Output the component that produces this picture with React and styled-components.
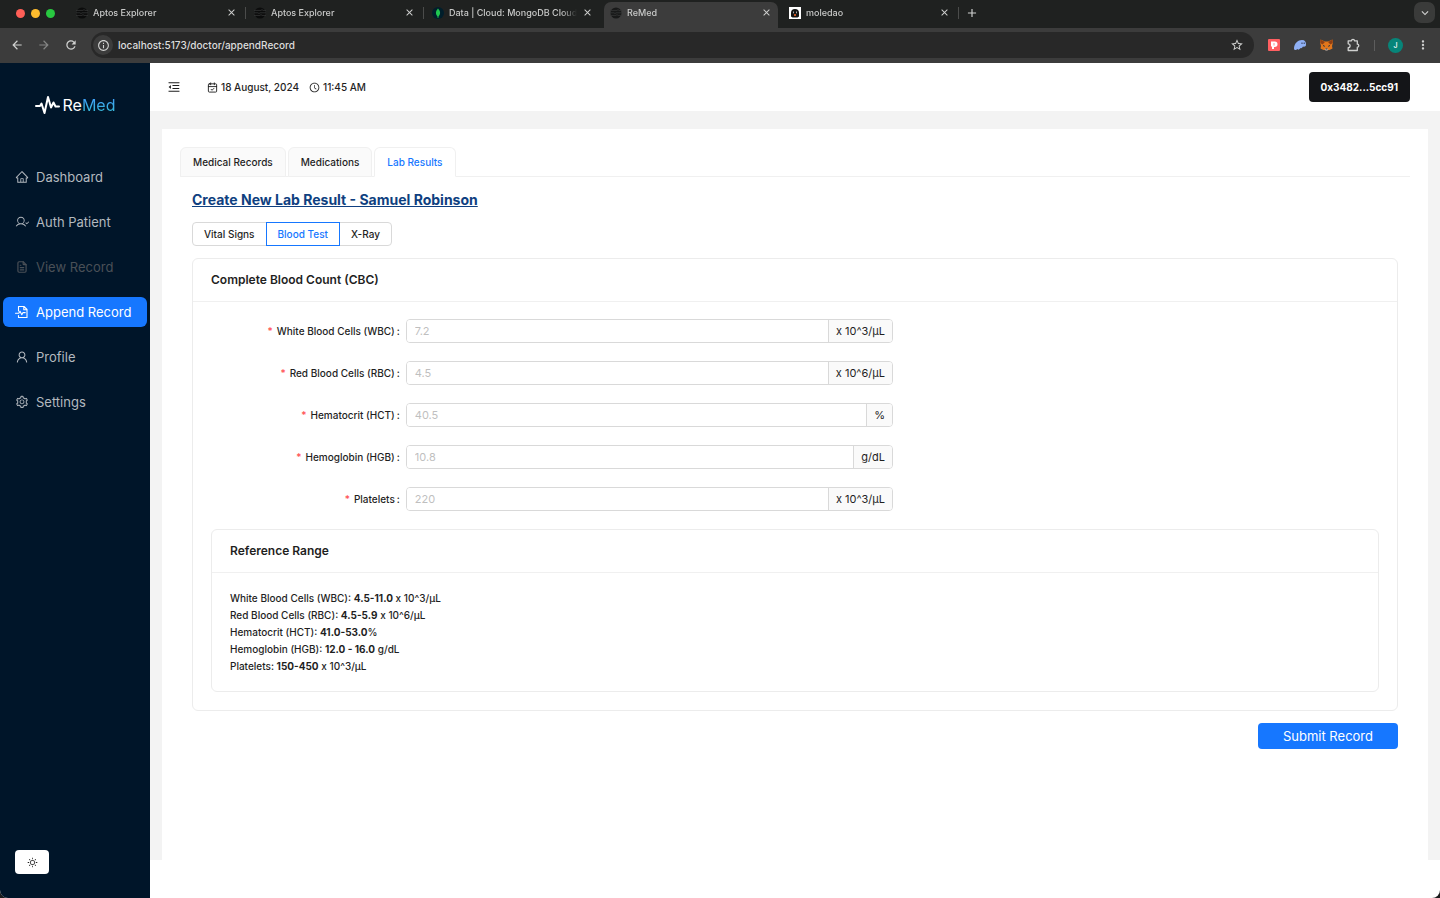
import React from "react";
import styled, { createGlobalStyle } from "styled-components";
import {
  AiOutlineClockCircle,
  AiOutlineHome,
  AiOutlineMenuFold,
  AiOutlineSetting,
  AiOutlineSun,
  AiOutlineUser,
} from "react-icons/ai";
import { PiUserCheck } from "react-icons/pi";
import { TbFileText } from "react-icons/tb";
import { LuCalendarCheck } from "react-icons/lu";
import {
  MdArrowBack,
  MdArrowForward,
  MdRefresh,
  MdInfoOutline,
  MdStarBorder,
  MdMoreVert,
  MdClose,
  MdAdd,
  MdKeyboardArrowDown,
} from "react-icons/md";

const GlobalStyle = createGlobalStyle`
  * {
    box-sizing: border-box;
  }
  body {
    margin: 0;
    background: #1b1c1d;
    color: #1f1f1f;
    font-family: Inter, "Liberation Sans", sans-serif;
    font-size: 10px;
    font-weight: 500;
  }
  button, input {
    font-family: inherit;
    font-size: inherit;
    font-weight: inherit;
    color: inherit;
  }
  button {
    padding: 0;
    border: none;
    background: none;
    cursor: pointer;
  }
  svg {
    display: block;
    flex-shrink: 0;
  }
`;

const Window = styled.div`
  min-height: 100vh;
  display: flex;
  flex-direction: column;
  overflow: hidden;
  border-radius: 0 0 8px 8px;
  background: #ffffff;
`;

/* browser */
const TabStrip = styled.div`
  height: 28px;
  display: flex;
  background: #1f2120;
  color: #c9cac9;
`;
const Lights = styled.div`
  display: flex;
  align-items: center;
  gap: 6px;
  padding: 0 13px 2px 16px;
`;
const Light = styled.span`
  width: 9px;
  height: 9px;
  border-radius: 50%;
  background: ${(props) => props.$color};
`;
const Tab = styled.div`
  position: relative;
  width: ${(props) => (props.$active ? "174px" : "178px")};
  height: ${(props) => (props.$active ? "26px" : "25px")};
  margin: ${(props) => (props.$active ? "2px 3px 0 2px" : "0")};
  padding: ${(props) => (props.$active ? "0 6px 5px" : "0 9px 0 8px")};
  display: flex;
  align-items: center;
  gap: 5px;
  font-size: 9px;
  border-radius: 7px 7px 0 0;
  background: ${(props) => (props.$active ? "#3c3c3c" : "transparent")};

  &::after {
    content: "";
    position: absolute;
    right: 0;
    top: 7px;
    width: 1px;
    height: 12px;
    background: ${(props) => (props.$divider ? "#4b4c4b" : "transparent")};
  }
`;
const TabTitle = styled.span`
  flex: 1;
  min-width: 0;
  overflow: hidden;
  white-space: nowrap;
  mask-image: linear-gradient(to right, #000 88%, transparent);
`;
const ChromeButton = styled.button`
  display: flex;
  align-items: center;
  justify-content: center;
  color: ${(props) => (props.$dim ? "#858685" : "#d0d1d0")};
`;
const NewTab = styled(ChromeButton)`
  height: 25px;
  padding: 0 6px;
`;
const TabSearch = styled(ChromeButton)`
  width: 21px;
  height: 21px;
  margin: 2px 5px 0 auto;
  border-radius: 7px;
  background: #3a3b3a;
`;
const Toolbar = styled.div`
  height: 35px;
  display: flex;
  align-items: center;
  padding: 0 10px 1px;
  background: #3c3c3c;
`;
const NavButtons = styled.div`
  display: flex;
  gap: 13px;
  margin-right: 13px;
`;
const Address = styled.div`
  flex: 1;
  height: 26px;
  display: flex;
  align-items: center;
  gap: 5px;
  padding: 0 10px 0 2px;
  border-radius: 13px;
  background: #282828;
`;
const InfoBadge = styled(ChromeButton)`
  width: 20px;
  height: 20px;
  border-radius: 50%;
  background: #3c3c3c;
`;
const AddressInput = styled.input`
  flex: 1;
  min-width: 0;
  padding: 0;
  border: none;
  outline: none;
  background: transparent;
  color: #dddddd;
`;
const Extensions = styled.div`
  display: flex;
  align-items: center;
  gap: 13px;
  margin-left: 14px;
`;
const ToolbarDivider = styled.span`
  width: 1px;
  height: 11px;
  background: #5d5d5d;
`;
const Avatar = styled.button`
  width: 15px;
  height: 15px;
  border-radius: 50%;
  background: #078579;
  color: #ffffff;
  font-size: 7px;
`;

/* page */
const Page = styled.div`
  flex: 1;
  display: flex;
`;
const Sidebar = styled.aside`
  width: 150px;
  display: flex;
  flex-direction: column;
  padding: 31px 3px 24px;
  background: #001529;
`;
const Logo = styled.a`
  display: flex;
  align-items: center;
  justify-content: center;
  gap: 3px;
  height: 22px;
  margin-bottom: 46px;
  color: #ffffff;
  font-size: 16px;
  font-weight: 400;
  text-decoration: none;
`;
const LogoAccent = styled.span`
  background: linear-gradient(#4096ff, #36c2d4);
  background-clip: text;
  color: transparent;
`;
const Menu = styled.nav`
  display: flex;
  flex-direction: column;
  gap: 15px;
`;
const MenuItem = styled.a`
  height: 30px;
  display: flex;
  align-items: center;
  gap: 7px;
  padding-left: 12px;
  border-radius: 6px;
  font-size: 13px;
  font-weight: 400;
  text-decoration: none;
  background: ${(props) => (props.$active ? "#1677ff" : "transparent")};
  color: ${(props) =>
    props.$active ? "#ffffff" : props.$disabled ? "#4a5057" : "#b3b9bf"};
`;
const ThemeButton = styled.button`
  width: 34px;
  height: 24px;
  display: flex;
  align-items: center;
  justify-content: center;
  margin: auto 0 0 12px;
  border-radius: 4px;
  background: #ffffff;
`;
const Main = styled.main`
  flex: 1;
  min-width: 0;
  display: flex;
  flex-direction: column;
`;
const Header = styled.header`
  height: 48px;
  display: flex;
  align-items: center;
  padding: 0 30px 0 17px;
`;
const DateTime = styled.div`
  display: flex;
  align-items: center;
  gap: 3px;
  margin-left: ${(props) => (props.$first ? "26px" : "10px")};
`;
const Wallet = styled.button`
  height: 30px;
  margin-left: auto;
  padding: 0 12px;
  border-radius: 4px;
  background: #141518;
  color: #ffffff;
  font-weight: 700;
`;
const Content = styled.div`
  flex: 1;
  display: flex;
  margin-bottom: 38px;
  padding: 18px 12px 0;
  background: #f3f3f3;
`;
const Panel = styled.section`
  flex: 1;
  min-width: 0;
  padding: 18px;
  background: #ffffff;
`;
const Tabs = styled.div`
  display: flex;
  gap: 2px;
  border-bottom: 1px solid #f0f0f0;
`;
const PageTab = styled.button`
  height: 30px;
  margin-bottom: -1px;
  padding: 0 12px;
  border: 1px solid #f0f0f0;
  border-bottom-color: ${(props) => (props.$active ? "#ffffff" : "#f0f0f0")};
  border-radius: 6px 6px 0 0;
  background: ${(props) => (props.$active ? "#ffffff" : "#fafafa")};
  color: ${(props) => (props.$active ? "#1677ff" : "#1f1f1f")};
`;
const Form = styled.form`
  display: flex;
  flex-direction: column;
  padding: 13px 12px 0;
`;
const Title = styled.h1`
  margin: 0 0 12px;
  color: #0f3f80;
  font-size: 14px;
  font-weight: 700;
  line-height: 20px;
  text-decoration: underline;
`;
const Segments = styled.div`
  display: flex;
  margin-bottom: 12px;
`;
const Segment = styled.button`
  height: 24px;
  margin-right: -1px;
  padding: 0 11px;
  position: relative;
  z-index: ${(props) => (props.$active ? 1 : 0)};
  border: 1px solid ${(props) => (props.$active ? "#1677ff" : "#d9d9d9")};
  color: ${(props) => (props.$active ? "#1677ff" : "#1f1f1f")};
  background: #ffffff;

  &:first-child {
    border-radius: 4px 0 0 4px;
  }
  &:last-child {
    border-radius: 0 4px 4px 0;
  }
`;
const Card = styled.section`
  border: 1px solid #ececec;
  border-radius: 6px;
`;
const CardTitle = styled.h2`
  margin: 0;
  padding: 0 18px;
  border-bottom: 1px solid #f0f0f0;
  font-size: 12px;
  font-weight: 600;
  line-height: 42px;
`;
const CardBody = styled.div`
  padding: ${(props) => (props.$text ? "17px 18px 16px" : "17px 18px 18px")};
`;
const Fields = styled.div`
  width: 682px;
  max-width: 100%;
  display: flex;
  flex-direction: column;
  gap: 18px;
  margin-bottom: 18px;
`;
const Field = styled.div`
  display: grid;
  grid-template-columns: 2fr 5fr;
  align-items: center;
`;
const Label = styled.label`
  padding-right: 6px;
  text-align: right;
`;
const Required = styled.span`
  margin-right: 4px;
  color: #ff4d4f;
`;
const Colon = styled.span`
  margin-left: 2px;
`;
const InputGroup = styled.div`
  height: 24px;
  display: flex;
  border: 1px solid #d9d9d9;
  border-radius: 4px;
  overflow: hidden;
  font-size: 11px;
  font-weight: 400;
`;
const ValueInput = styled.input`
  flex: 1;
  min-width: 0;
  padding: 0 8px;
  border: none;
  outline: none;

  &::placeholder {
    color: #bfbfbf;
  }
`;
const Unit = styled.span`
  display: flex;
  align-items: center;
  padding: 0 7px;
  border-left: 1px solid #d9d9d9;
  background: #fafafa;
`;
const Ranges = styled.ul`
  margin: 0;
  padding: 0;
  list-style: none;
  line-height: 17px;
`;
const Value = styled.b`
  font-weight: 700;
`;
const Submit = styled.button`
  align-self: flex-end;
  height: 26px;
  margin-top: 12px;
  padding: 0 25px;
  border-radius: 4px;
  background: #1677ff;
  color: #ffffff;
  font-size: 13px;
  font-weight: 400;
`;

const AptosIcon = ({ color = "#0b0c0c" }) => (
  <svg width="12" height="12" viewBox="0 0 12 12">
    <circle cx="6" cy="6" r="5.5" fill={color} />
    <path
      d="M0 3.4h7l1-.8 1 .8h3M0 5.8h4l1 .8 1-.8h6M0 8.4h6l1-.8 1 .8h4"
      fill="none"
      stroke="#353636"
      strokeWidth="0.8"
    />
  </svg>
);
const MongoIcon = () => (
  <svg width="12" height="12" viewBox="0 0 12 12">
    <circle cx="6" cy="6" r="6" fill="#001e2b" />
    <path d="M6 1.500c3 3 2.500 6.500 0 8.200-2.500-1.700-3-5.200 0-8.200z" fill="#1fc64f" />
    <path d="M6 9v2" stroke="#1fc64f" strokeWidth="0.8" />
  </svg>
);
const MoledaoIcon = () => (
  <svg width="12" height="12" viewBox="0 0 12 12">
    <path d="M0 0h12v12H0z" fill="#ffffff" />
    <path d="M2 9.500V6a4 4 0 0 1 8 0v3.500L8.500 10.500h-5z" fill="#141414" />
    <path d="M4.500 4.500v1.800M7.500 4.500v1.800" stroke="#b9b9b9" strokeWidth="0.9" />
    <path d="M5.200 7h1.600v2H5.200z" fill="#f26522" />
  </svg>
);
const PocketIcon = () => (
  <svg width="12" height="12" viewBox="0 0 12 12">
    <rect width="12" height="12" rx="1" fill="#ff5f61" />
    <path d="M3 2.500h3.800a2.700 2.700 0 0 1 0 5.400H6V10H4V7.500H3z" fill="#ffffff" />
    <path d="M6 4v2.500" stroke="#ff5f61" strokeWidth="0.7" />
  </svg>
);
const GhostIcon = () => (
  <svg width="14" height="12" viewBox="0 0 14 12">
    <path
      d="M1 9C1.500 4 5 1 9 1c3 0 4.300 2 4 5-.2 1.500-1.500 2-3 1.500C9 9 8.500 9.500 7.500 9 6 11 5 11 4.500 10 3 11.500.8 11.500 1 9z"
      fill="#8fb0f5"
    />
    <path d="M9 3.500v1.500M11.200 3.500v1.500" stroke="#303952" strokeWidth="1" />
  </svg>
);
const FoxIcon = () => (
  <svg width="13" height="12" viewBox="0 0 13 12">
    <path d="M.5.5 5 2.500h3L12.500.5l.3 3.500-.8 3 .5 2.500-3 1.500H3.500l-3-1.500L1 7 .2 4z" fill="#e2761b" />
    <path d="M.5.5 5 3 2.500 5.500.3 4zM12.500.5 8 3l2.500 2.500L12.700 4z" fill="#8f3f13" />
    <path d="m4.500 9.800 1 1.700h2l1-1.700z" fill="#d7c1b3" />
    <path d="m3 6.500 1.800.8M10 6.500l-1.800.8M5.500 10h2" stroke="#233447" />
  </svg>
);
const PuzzleIcon = () => (
  <svg width="15" height="14" viewBox="0 0 15 14">
    <path
      d="M2.200 2.800h3.300a1.500 1.500 0 0 1 3 0h2.800v3.400a1.500 1.500 0 0 1 0 3v3.300H2.200V9.600a1.900 1.900 0 0 0 0-3.800z"
      fill="none"
      stroke="currentColor"
      strokeWidth="1.300"
      strokeLinejoin="round"
    />
  </svg>
);
const PulseIcon = () => (
  <svg width="25" height="20" viewBox="0 0 25 20">
    <path
      d="M1 11h4l1.500-2.500L9.500 18 13 2l3 10.500 2.500-5 2 4H24"
      fill="none"
      stroke="currentColor"
      strokeWidth="2"
      strokeLinecap="round"
      strokeLinejoin="round"
    />
  </svg>
);
const FilePulseIcon = ({ size }) => (
  <svg width={size} height={size} viewBox="0 0 14 14">
    <path
      d="M3.500 6V1.500h5.500l3 3v8h-8.500V10.500M8.800 1.500v3.200H12M.5 8.200h3.300l1.200-2 1.800 3.600 1.200-2.200h2.200"
      fill="none"
      stroke="currentColor"
      strokeWidth="1.100"
      strokeLinejoin="round"
      strokeLinecap="round"
    />
  </svg>
);

const browserTabs = [
  { title: "Aptos Explorer", icon: <AptosIcon />, divider: true },
  { title: "Aptos Explorer", icon: <AptosIcon />, divider: true },
  { title: "Data | Cloud: MongoDB Cloud", icon: <MongoIcon /> },
  { title: "ReMed", icon: <AptosIcon color="#181919" />, active: true },
  { title: "moledao", icon: <MoledaoIcon />, divider: true },
];

const menu = [
  { label: "Dashboard", Icon: AiOutlineHome },
  { label: "Auth Patient", Icon: PiUserCheck },
  { label: "View Record", Icon: TbFileText, disabled: true },
  { label: "Append Record", Icon: FilePulseIcon, active: true },
  { label: "Profile", Icon: AiOutlineUser },
  { label: "Settings", Icon: AiOutlineSetting },
];

const fields = [
  { id: "wbc", label: "White Blood Cells (WBC)", placeholder: "7.2", unit: "x 10^3/µL" },
  { id: "rbc", label: "Red Blood Cells (RBC)", placeholder: "4.5", unit: "x 10^6/µL" },
  { id: "hct", label: "Hematocrit (HCT)", placeholder: "40.5", unit: "%" },
  { id: "hgb", label: "Hemoglobin (HGB)", placeholder: "10.8", unit: "g/dL" },
  { id: "platelets", label: "Platelets", placeholder: "220", unit: "x 10^3/µL" },
];

const ranges = [
  { label: "White Blood Cells (WBC)", value: "4.5-11.0", unit: " x 10^3/µL" },
  { label: "Red Blood Cells (RBC)", value: "4.5-5.9", unit: " x 10^6/µL" },
  { label: "Hematocrit (HCT)", value: "41.0-53.0", unit: "%" },
  { label: "Hemoglobin (HGB)", value: "12.0 - 16.0", unit: " g/dL" },
  { label: "Platelets", value: "150-450", unit: " x 10^3/µL" },
];

const Browser = () => {
  return (
    <header>
      <TabStrip>
        <Lights>
          <Light $color="#ff5f57" />
          <Light $color="#febc2e" />
          <Light $color="#28c840" />
        </Lights>
        {browserTabs.map((tab, index) => (
          <Tab key={index} $active={tab.active} $divider={tab.divider}>
            {tab.icon}
            <TabTitle>{tab.title}</TabTitle>
            <ChromeButton aria-label="Close tab">
              <MdClose size={11} />
            </ChromeButton>
          </Tab>
        ))}
        <NewTab aria-label="New tab">
          <MdAdd size={14} />
        </NewTab>
        <TabSearch aria-label="Search tabs">
          <MdKeyboardArrowDown size={14} />
        </TabSearch>
      </TabStrip>
      <Toolbar>
        <NavButtons>
          <ChromeButton aria-label="Back">
            <MdArrowBack size={14} />
          </ChromeButton>
          <ChromeButton aria-label="Forward" $dim>
            <MdArrowForward size={14} />
          </ChromeButton>
          <ChromeButton aria-label="Reload">
            <MdRefresh size={14} />
          </ChromeButton>
        </NavButtons>
        <Address>
          <InfoBadge aria-label="Site information">
            <MdInfoOutline size={13} />
          </InfoBadge>
          <AddressInput
            aria-label="Address"
            defaultValue="localhost:5173/doctor/appendRecord"
          />
          <ChromeButton aria-label="Bookmark">
            <MdStarBorder size={14} />
          </ChromeButton>
        </Address>
        <Extensions>
          <PocketIcon />
          <GhostIcon />
          <FoxIcon />
          <ChromeButton aria-label="Extensions">
            <PuzzleIcon />
          </ChromeButton>
          <ToolbarDivider />
          <Avatar>J</Avatar>
          <ChromeButton aria-label="Menu">
            <MdMoreVert size={14} />
          </ChromeButton>
        </Extensions>
      </Toolbar>
    </header>
  );
};

const SideMenu = () => {
  return (
    <Sidebar>
      <Logo href="#">
        <PulseIcon />
        <span>
          Re<LogoAccent>Med</LogoAccent>
        </span>
      </Logo>
      <Menu>
        {menu.map(({ label, Icon, active, disabled }) => (
          <MenuItem key={label} href="#" $active={active} $disabled={disabled}>
            <Icon size={14} />
            {label}
          </MenuItem>
        ))}
      </Menu>
      <ThemeButton aria-label="Toggle theme">
        <AiOutlineSun size={11} />
      </ThemeButton>
    </Sidebar>
  );
};

const LabForm = () => {
  return (
    <Form onSubmit={(e) => e.preventDefault()}>
      <Title>Create New Lab Result - Samuel Robinson</Title>
      <Segments>
        <Segment type="button">Vital Signs</Segment>
        <Segment type="button" $active>
          Blood Test
        </Segment>
        <Segment type="button">X-Ray</Segment>
      </Segments>
      <Card>
        <CardTitle>Complete Blood Count (CBC)</CardTitle>
        <CardBody>
          <Fields>
            {fields.map((field) => (
              <Field key={field.id}>
                <Label htmlFor={field.id}>
                  <Required>*</Required>
                  {field.label}
                  <Colon>:</Colon>
                </Label>
                <InputGroup>
                  <ValueInput id={field.id} placeholder={field.placeholder} />
                  <Unit>{field.unit}</Unit>
                </InputGroup>
              </Field>
            ))}
          </Fields>
          <Card>
            <CardTitle>Reference Range</CardTitle>
            <CardBody $text>
              <Ranges>
                {ranges.map((range) => (
                  <li key={range.label}>
                    {range.label}: <Value>{range.value}</Value>
                    {range.unit}
                  </li>
                ))}
              </Ranges>
            </CardBody>
          </Card>
        </CardBody>
      </Card>
      <Submit type="submit">Submit Record</Submit>
    </Form>
  );
};

const App = () => {
  return (
    <Window>
      <GlobalStyle />
      <Browser />
      <Page>
        <SideMenu />
        <Main>
          <Header>
            <button aria-label="Collapse menu">
              <AiOutlineMenuFold size={14} />
            </button>
            <DateTime $first>
              <LuCalendarCheck size={11} />
              18 August, 2024
            </DateTime>
            <DateTime>
              <AiOutlineClockCircle size={11} />
              11:45 AM
            </DateTime>
            <Wallet>0x3482...5cc91</Wallet>
          </Header>
          <Content>
            <Panel>
              <Tabs>
                <PageTab>Medical Records</PageTab>
                <PageTab>Medications</PageTab>
                <PageTab $active>Lab Results</PageTab>
              </Tabs>
              <LabForm />
            </Panel>
          </Content>
        </Main>
      </Page>
    </Window>
  );
};

export default App;
